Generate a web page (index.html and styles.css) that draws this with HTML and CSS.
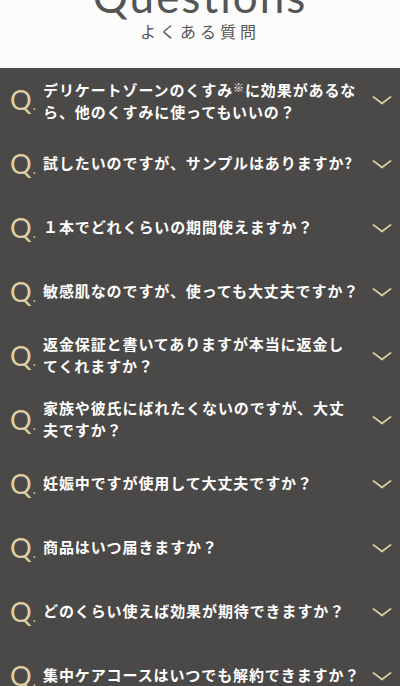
FILE: index.html
```html
<!DOCTYPE html>
<html lang="ja">
  <head>
    <meta charset="UTF-8" />
    <meta name="viewport" content="width=device-width, initial-scale=1" />
    <title>よくある質問</title>
    <link rel="stylesheet" href="styles.css">
  </head>
  <body>
    <header class="faqHead">
      <h2 class="faqTitle">Questions</h2>
      <p class="faqSub">よくある質問</p>
    </header>

    <ul class="faqList">
      <li class="faqItem">
        <span class="qMark">Q<i>.</i></span>
        <span class="qText">デリケートゾーンのくすみ<small>※</small>に効果があるな<br>ら、他のくすみに使ってもいいの？</span>
        <span class="chev"></span>
      </li>
      <li class="faqItem">
        <span class="qMark">Q<i>.</i></span>
        <span class="qText">試したいのですが、サンプルはありますか?</span>
        <span class="chev"></span>
      </li>
      <li class="faqItem">
        <span class="qMark">Q<i>.</i></span>
        <span class="qText">１本でどれくらいの期間使えますか？</span>
        <span class="chev"></span>
      </li>
      <li class="faqItem">
        <span class="qMark">Q<i>.</i></span>
        <span class="qText">敏感肌なのですが、使っても大丈夫ですか？</span>
        <span class="chev"></span>
      </li>
      <li class="faqItem">
        <span class="qMark">Q<i>.</i></span>
        <span class="qText">返金保証と書いてありますが本当に返金し<br>てくれますか？</span>
        <span class="chev"></span>
      </li>
      <li class="faqItem">
        <span class="qMark">Q<i>.</i></span>
        <span class="qText">家族や彼氏にばれたくないのですが、大丈<br>夫ですか？</span>
        <span class="chev"></span>
      </li>
      <li class="faqItem">
        <span class="qMark">Q<i>.</i></span>
        <span class="qText">妊娠中ですが使用して大丈夫ですか？</span>
        <span class="chev"></span>
      </li>
      <li class="faqItem">
        <span class="qMark">Q<i>.</i></span>
        <span class="qText">商品はいつ届きますか？</span>
        <span class="chev"></span>
      </li>
      <li class="faqItem">
        <span class="qMark">Q<i>.</i></span>
        <span class="qText">どのくらい使えば効果が期待できますか？</span>
        <span class="chev"></span>
      </li>
      <li class="faqItem">
        <span class="qMark">Q<i>.</i></span>
        <span class="qText">集中ケアコースはいつでも解約できますか？</span>
        <span class="chev"></span>
      </li>
    </ul>
  </body>
</html>
```

FILE: styles.css
```css
*,
*:before,
*:after {
  margin: 0;
  padding: 0;
  box-sizing: border-box;
}

body {
  font-family: "Noto Sans CJK JP", "Noto Sans", sans-serif;
  background-color: #4b4947;
  overflow: hidden;
}

.faqHead {
  height: 68px;
  background-color: #fcfcfc;
  text-align: center;
  overflow: hidden;
}

.faqTitle {
  margin-top: -26px;
  font-family: "Lato", sans-serif;
  font-size: 44px;
  font-weight: 400;
  line-height: 1;
  letter-spacing: 2px;
  color: #555;
}

.faqSub {
  margin-top: 3px;
  font-size: 16px;
  font-weight: 400;
  line-height: 20px;
  letter-spacing: 4px;
  color: #555;
}

.faqList {
  list-style: none;
}

.faqItem {
  height: 64px;
  display: flex;
  align-items: center;
  padding: 0 8px 0 10px;
}

.qMark {
  width: 33px;
  flex-shrink: 0;
  margin-top: -2px;
  font-family: "Lato", sans-serif;
  font-size: 27px;
  font-weight: 400;
  line-height: 1;
  color: #ddd0a6;
}

.qMark i {
  font-style: normal;
  font-size: 13px;
  margin-left: 1px;
}

.qText {
  flex: 1;
  margin-top: -2px;
  font-size: 15px;
  font-weight: 700;
  line-height: 22px;
  letter-spacing: 0.06em;
  color: #fff;
}

.qText small {
  font-size: 11px;
  vertical-align: 4px;
  font-weight: 400;
}

.chev {
  width: 14px;
  height: 14px;
  flex-shrink: 0;
  margin: 0 3px 7px 0;
  border-right: 2px solid #ddd0a6;
  border-bottom: 2px solid #ddd0a6;
  transform: scaleY(0.75) rotate(45deg);
}
```
